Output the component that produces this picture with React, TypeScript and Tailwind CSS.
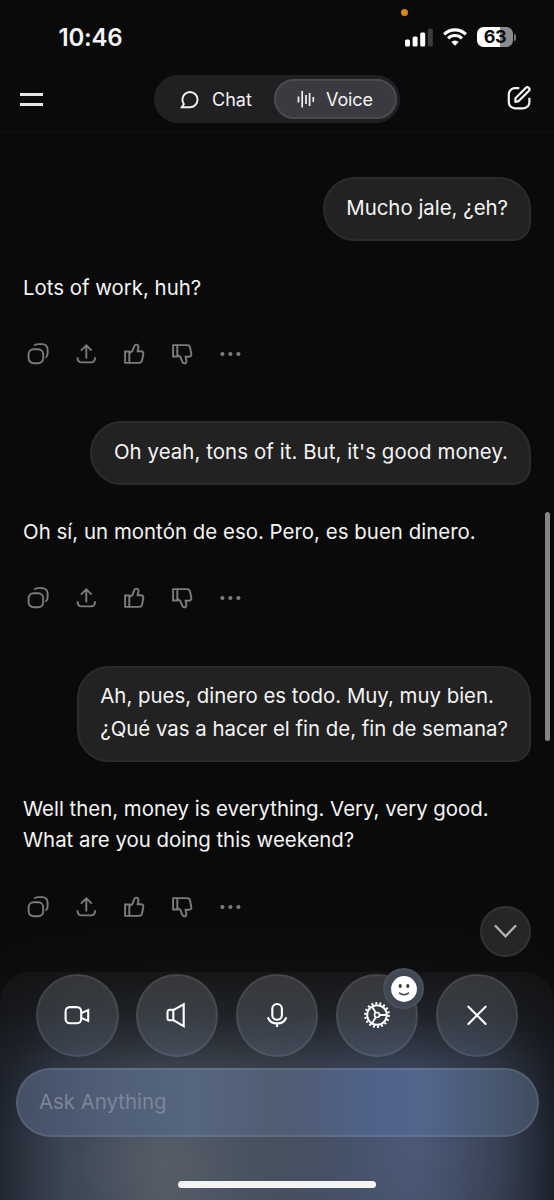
import React from "react";
import clsx from "clsx";

interface Message {
  id: number;
  role: "user" | "assistant";
  lines: string[];
  className?: string;
}

interface IconProps {
  className?: string;
}

const messages: Message[] = [
  { id: 1, role: "user", lines: ["Mucho jale, ¿eh?"] },
  { id: 2, role: "assistant", lines: ["Lots of work, huh?"] },
  {
    id: 3,
    role: "user",
    lines: ["Oh yeah, tons of it. But, it's good money."],
    className: "tracking-[0.08px]",
  },
  {
    id: 4,
    role: "assistant",
    lines: ["Oh sí, un montón de eso. Pero, es buen dinero."],
    className: "tracking-[0.035px]",
  },
  {
    id: 5,
    role: "user",
    lines: [
      "Ah, pues, dinero es todo. Muy, muy bien.",
      "¿Qué vas a hacer el fin de, fin de semana?",
    ],
  },
  {
    id: 6,
    role: "assistant",
    lines: [
      "Well then, money is everything. Very, very good.",
      "What are you doing this weekend?",
    ],
  },
];

const CopyIcon = () => (
  <svg width="24" height="24" viewBox="0 0 24 24" fill="none" stroke="currentColor" strokeWidth="1.9">
    <rect x="2.6" y="7.2" width="14.6" height="14" rx="5" />
    <path d="M8.3 3.7C9.2 2.7 10.4 2.1 12 2.1h4.4a5.2 5.2 0 0 1 5.2 5.2v4.2c0 2-.8 3.4-2.1 4.3" />
  </svg>
);

const ShareIcon = () => (
  <svg width="24" height="24" viewBox="0 0 24 24" fill="none" stroke="currentColor" strokeWidth="1.9">
    <path d="M12.3 16.5V3.5M6.9 8.7l5.4-5.4 5.4 5.4" />
    <path d="M3.5 15.2c0 3.7 1.2 5.2 4.2 5.2h9.2c3 0 4.2-1.5 4.2-5.2" />
  </svg>
);

const ThumbIcon = ({ className }: IconProps) => (
  <svg
    width="24"
    height="24"
    viewBox="0 0 24 24"
    fill="none"
    stroke="currentColor"
    strokeWidth="1.9"
    className={className}
  >
    <path d="M3.1 9.5h4.2v11.4H3.1z" />
    <path d="M7.3 11.3l3-2.2 1.9-4.8c.5-1.2 1.2-1.7 2.2-1.7 1.5 0 2.2 1.2 2 2.7l-.8 4h3.4c1.800 0 2.600 1.200 2.300 2.700l-1.200 6.400c-.4 1.700-1.300 2.500-2.900 2.500H7.300" />
  </svg>
);

const DotsIcon = () => (
  <svg width="24" height="24" viewBox="0 0 24 24" fill="currentColor">
    <circle cx="4.4" cy="12" r="2.1" />
    <circle cx="12.4" cy="12" r="2.1" />
    <circle cx="20.4" cy="12" r="2.1" />
  </svg>
);

const StatusBar = () => (
  <div className="relative flex h-[70px] items-start justify-between pl-[58.5px] pr-[38px] pt-[22.5px]">
    <span className="text-[24px] font-semibold leading-[30px] tracking-[-0.2px]">10:46</span>
    {/* Microphone in use */}
    <span className="absolute left-[401px] top-[9px] size-[7px] rounded-full bg-[#d9861c]" />
    <div className="flex items-center pt-[4.5px]">
      <svg width="28" height="19" viewBox="0 0 28 19" fill="#fff">
        <rect x="0" y="11.5" width="5" height="7" rx="1.5" />
        <rect x="7.6" y="8.5" width="5" height="10" rx="1.5" />
        <rect x="15.2" y="4.5" width="5" height="14" rx="1.5" />
        <rect x="22.8" y="0.5" width="5" height="18" rx="1.5" fill="#3c3c3e" />
      </svg>
      <svg width="24" height="18" viewBox="0 0 24 18" className="ml-[10px]" fill="none" stroke="#fff">
        <path d="M1.2 6.3a15.4 15.4 0 0 1 21.6 0" strokeWidth="3.2" />
        <path d="M5.1 10.3a9.8 9.8 0 0 1 13.8 0" strokeWidth="3.1" />
        <path d="M12 17.7l-3.7-3.8a5.3 5.3 0 0 1 7.4 0z" fill="#fff" stroke="none" />
      </svg>
      <div className="ml-[10px] flex h-[20px] w-[36px] items-center justify-center rounded-[6.5px] bg-[linear-gradient(to_right,#fff_63%,#8b8b8d_63%)]">
        <span className="text-[18px] font-bold leading-[20px] tracking-[-0.3px] text-[#0a0a0a]">63</span>
      </div>
      <span className="ml-px h-[7px] w-[2px] rounded-r-full bg-[#77777a]" />
    </div>
  </div>
);

const Header = () => (
  <header className="flex h-[62px] items-start justify-between border-b border-[#101011] pl-[20px] pr-[22px] pt-[5px]">
    <button className="flex h-[49px] w-[24px] flex-col justify-center gap-[7px]" aria-label="Menu">
      <span className="h-[3px] w-[23px] bg-[#e6e6e6]" />
      <span className="h-[3px] w-[23px] bg-[#e6e6e6]" />
    </button>
    <div className="ml-[3px] flex h-[48px] w-[246px] items-center rounded-full bg-[#202022] pr-[3px]">
      <button className="flex h-[40px] w-[120px] items-center pl-[26px] text-[18px] text-[#f2f2f2]">
        <svg width="20" height="20" viewBox="0 0 20 20" fill="none" stroke="currentColor" strokeWidth="1.9">
          <path d="M1.8 18.2H10A7.6 7.6 0 1 0 2.4 10.6c0 1.8.5 3.2 1.5 4.5z" />
        </svg>
        <span className="ml-[12px] mt-px">Chat</span>
      </button>
      <button className="flex h-[40px] w-[123px] items-center rounded-full border-2 border-[#4a4a50] bg-[#3b3a40] pl-[20px] text-[18px] text-[#f2f2f2]">
        <svg width="20" height="20" viewBox="0 0 20 20" fill="none" stroke="currentColor" strokeWidth="1.7">
          <path d="M2.5 7.5v6M6.2 2v16.5M10 6v9M13.6 4v13M17.3 8v5" />
        </svg>
        <span className="ml-[10px] mt-px tracking-[-0.1px]">Voice</span>
      </button>
    </div>
    <button className="mt-[10px]" aria-label="New chat">
      <svg width="25" height="25" viewBox="0 0 25 25" fill="none" stroke="#f4f4f4" strokeWidth="2.2">
        <path d="M12.3 3.2H8A6.2 6.2 0 0 0 1.8 9.4v7.8A6.2 6.2 0 0 0 8 23.4h8.2a6.2 6.2 0 0 0 6.2-6.2v-4.5" />
        <path d="M8.4 16.8v-3.5L18.7 3c1-1 2.3-.9 3.1-.1.8.8.9 2.1-.1 3.1L11.7 16.1z" strokeLinejoin="round" />
      </svg>
    </button>
  </header>
);

const MessageActions = () => (
  <div className="flex h-[24px] gap-[24px] pl-[3px] text-[#7c7c7c]">
    <CopyIcon />
    <ShareIcon />
    <ThumbIcon />
    <ThumbIcon className="-scale-y-100" />
    <DotsIcon />
  </div>
);

const UserBubble = ({ message }: { message: Message }) => (
  <div className="self-end rounded-[32px] rounded-br-[18px] border-2 border-[#2b2b2b] bg-[#222222] pb-[14.2px] pl-[21.5px] pr-[21px] pt-[12.8px]">
    {message.lines.map((line) => (
      <p key={line} className={clsx("h-[32.6px] whitespace-nowrap leading-[32.6px]", message.className)}>
        {line}
      </p>
    ))}
  </div>
);

const AssistantReply = ({ message }: { message: Message }) => (
  <div className="mb-[55.2px] mt-[31px]">
    {message.lines.map((line) => (
      <p key={line} className={clsx("h-[31.5px] whitespace-nowrap leading-[31.5px]", message.className)}>
        {line}
      </p>
    ))}
    <div className="mt-[39px]">
      <MessageActions />
    </div>
  </div>
);

const ControlButton = ({ label, children }: { label: string; children: React.ReactNode }) => (
  <button
    aria-label={label}
    className="flex size-[82.5px] shrink-0 items-center justify-center rounded-full border-2 border-white/[0.07] bg-[linear-gradient(to_bottom,rgba(255,255,255,0.14),rgba(125,145,180,0.2))] bg-origin-border text-white"
  >
    {children}
  </button>
);

const GearIcon = () => (
  <svg width="28" height="28" viewBox="0 0 28 28" fill="none" stroke="currentColor">
    <circle cx="14" cy="14" r="9.8" strokeWidth="2" />
    <circle cx="14" cy="14" r="11.8" strokeWidth="2.2" strokeDasharray="1.9 2.219" />
    <circle cx="14" cy="14" r="2.5" strokeWidth="1.7" />
    <path d="M16.5 14H24M12.7 11.8L9 5.4M12.7 16.2L9 22.6" strokeWidth="1.8" />
  </svg>
);

const VoiceControls = () => (
  <div className="relative flex justify-between px-[36px]">
    <ControlButton label="Camera">
      <svg width="28" height="28" viewBox="0 0 28 28" fill="none" stroke="currentColor" strokeWidth="2.1">
        <rect x="2.6" y="6.1" width="15.6" height="16.2" rx="4.2" />
        <path d="M18.2 12.1l7-3v10.8l-7-3" />
      </svg>
    </ControlButton>
    <ControlButton label="Speaker">
      <svg width="28" height="28" viewBox="0 0 28 28" fill="none" stroke="currentColor" strokeWidth="2.1">
        <path d="M10.3 8.9H6.5a2 2 0 0 0-2 2v6.4a2 2 0 0 0 2 2h3.8z" />
        <path d="M10.3 9.1L20.7 3.300v21.800l-10.400-6" />
      </svg>
    </ControlButton>
    <ControlButton label="Microphone">
      <svg width="28" height="28" viewBox="0 0 28 28" fill="none" stroke="currentColor" strokeWidth="2.1">
        <rect x="9.3" y="3" width="9.6" height="15.8" rx="4.8" />
        <path d="M4.9 16.3c1.3 3.9 4.9 6.1 9.2 6.1s7.900-2.200 9.200-6.100M14.100 22.400v3.600" />
      </svg>
    </ControlButton>
    <ControlButton label="Voice settings">
      <GearIcon />
    </ControlButton>
    <ControlButton label="End">
      <svg width="28" height="28" viewBox="0 0 28 28" stroke="currentColor" strokeWidth="2.1" strokeLinecap="round">
        <path d="M5.4 5.7l17.2 17.2M22.6 5.7L5.4 22.9" />
      </svg>
    </ControlButton>
    {/* Personality badge on the settings button */}
    <div className="absolute left-[383px] top-[-6px] flex size-[41px] items-center justify-center rounded-full border-2 border-[#49505c] bg-[#414854]">
      <svg width="26" height="26" viewBox="0 0 26 26">
        <circle cx="13" cy="13" r="12.9" fill="#fff" />
        <ellipse cx="9.2" cy="9.9" rx="1.6" ry="2" fill="#353c49" />
        <ellipse cx="16.8" cy="9.9" rx="1.6" ry="2" fill="#353c49" />
        <path d="M8.5 17.2c2.7 1.9 6.3 1.9 9 0" fill="none" stroke="#353c49" strokeWidth="1.6" strokeLinecap="round" />
      </svg>
    </div>
  </div>
);

const App: React.FC = () => {
  return (
    <div className="relative flex h-[1200px] w-[554px] flex-col overflow-hidden bg-[#0a0a0a] font-['Inter',sans-serif] text-[20.4px] text-[#f4f4f4]">
      {/* Ambient glow behind the controls */}
      <div className="absolute inset-x-0 bottom-0 h-[290px] bg-[radial-gradient(ellipse_170px_220px_at_165px_255px,rgba(98,106,112,0.6),rgba(98,106,112,0.22)_50%,transparent),radial-gradient(ellipse_150px_220px_at_415px_235px,rgba(82,98,136,0.6),rgba(82,98,136,0.25)_50%,transparent),linear-gradient(to_right,#202632_0%,#353e4d_12%,#414b5b_30%,#424b5a_50%,#414c5f_75%,#303846_90%,#191e28_100%)]" />
      <div className="absolute inset-x-0 bottom-0 h-[290px] bg-[linear-gradient(to_bottom,#0a0a0a_0%,rgba(10,10,10,0.95)_20%,rgba(10,10,10,0.72)_36%,rgba(10,10,10,0.3)_52%,rgba(10,10,10,0.08)_68%,transparent_80%)]" />

      <StatusBar />
      <Header />

      <main className="relative flex h-[840px] flex-col px-[23px] pt-[45px]">
        {messages.map((message) =>
          message.role === "user" ? (
            <UserBubble key={message.id} message={message} />
          ) : (
            <AssistantReply key={message.id} message={message} />
          )
        )}
        {/* Scrollbar thumb */}
        <span className="absolute right-[4px] top-[380px] h-[229px] w-[5px] rounded-full bg-[#858585]" />
        <button
          aria-label="Scroll to bottom"
          className="absolute right-[23px] top-[774px] flex size-[51px] items-center justify-center rounded-full border-2 border-[#323232] bg-[#262626]"
        >
          <svg width="24" height="24" viewBox="0 0 24 24" fill="none" stroke="#b5b5b5" strokeWidth="2.2" strokeLinecap="round">
            <path d="M1.6 6l9.900 10.300L21.400 6" />
          </svg>
        </button>
      </main>

      <section className="relative flex flex-1 flex-col rounded-t-[30px] bg-[linear-gradient(to_bottom,rgba(255,255,255,0.03),transparent_60%)] pt-[2px]">
        <VoiceControls />
        <div className="mx-[15.5px] mt-[11.5px] flex h-[69px] items-center rounded-full border-2 border-white/[0.09] bg-[linear-gradient(to_right,#445066_0%,#505e77_18%,#56667f_34%,#4f5c72_52%,#50628a_68%,#52658b_78%,#4a5b76_88%,#404c5e_100%)] bg-origin-border pl-[21.5px]">
          <span className="text-[#7c8698]">Ask Anything</span>
        </div>
        <span className="mx-auto mt-[44px] h-[7px] w-[198px] rounded-full bg-[#f3f3f3]" />
      </section>
    </div>
  );
};

export default App;
